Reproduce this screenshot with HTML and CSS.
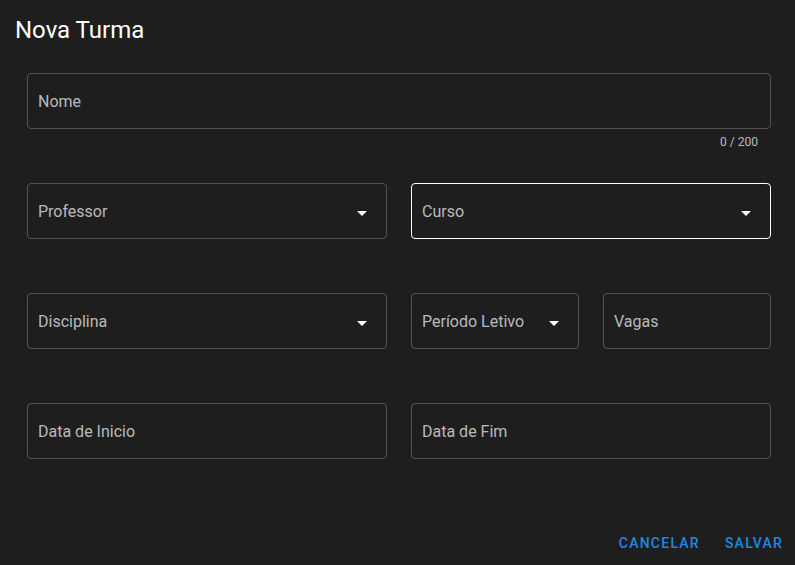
FILE: index.html
```html
<!DOCTYPE html>
<html lang="pt">
<head>
<meta charset="utf-8">
<title>Nova Turma</title>
<link rel="stylesheet" href="styles.css">
</head>
<body>
<div class="dialog">
  <h2 class="title">Nova Turma</h2>
  <div class="content">
    <div class="field-wrap">
      <div class="field"><span class="label">Nome</span></div>
      <div class="helper">0 / 200</div>
    </div>
    <div class="row two">
      <div class="field select"><span class="label">Professor</span>
        <svg class="arrow" viewBox="0 0 24 24" width="24" height="24"><path d="M7 10l5 5 5-5z"/></svg>
      </div>
      <div class="field select active"><span class="label">Curso</span>
        <svg class="arrow" viewBox="0 0 24 24" width="24" height="24"><path d="M7 10l5 5 5-5z"/></svg>
      </div>
    </div>
    <div class="row two">
      <div class="field select"><span class="label">Disciplina</span>
        <svg class="arrow" viewBox="0 0 24 24" width="24" height="24"><path d="M7 10l5 5 5-5z"/></svg>
      </div>
      <div class="row pair">
        <div class="field select"><span class="label">Período Letivo</span>
          <svg class="arrow" viewBox="0 0 24 24" width="24" height="24"><path d="M7 10l5 5 5-5z"/></svg>
        </div>
        <div class="field"><span class="label">Vagas</span></div>
      </div>
    </div>
    <div class="row two">
      <div class="field"><span class="label">Data de Inicio</span></div>
      <div class="field"><span class="label">Data de Fim</span></div>
    </div>
  </div>
  <div class="actions">
    <button class="btn">Cancelar</button>
    <button class="btn">Salvar</button>
  </div>
</div>
</body>
</html>
```
FILE: styles.css
```css
html, body {
  margin: 0;
  padding: 0;
  background: #1e1e1e;
  font-family: Roboto, "Liberation Sans", sans-serif;
  color: #fff;
}
.dialog {
  width: 795px;
  height: 565px;
  display: flex;
  flex-direction: column;
  box-sizing: border-box;
}
.title {
  margin: 0;
  padding: 14px 15px 0;
  font-size: 24px;
  font-weight: 400;
  line-height: 32px;
  height: 47px;
  box-sizing: content-box;
}
.content {
  padding: 12px 24px 0 27px;
  display: flex;
  flex-direction: column;
  gap: 54px;
  flex: 1;
}
.field-wrap {
  display: flex;
  flex-direction: column;
}
.helper {
  font-size: 12px;
  line-height: 20px;
  margin: 3px 13px -23px 0;
  text-align: right;
  color: rgba(255,255,255,0.7);
}
.row {
  display: grid;
  gap: 24px;
}
.row.two,
.row.pair {
  grid-template-columns: 1fr 1fr;
}
.field {
  position: relative;
  height: 56px;
  box-sizing: border-box;
  border: 1px solid rgba(255,255,255,0.23);
  border-radius: 4px;
  display: flex;
  align-items: center;
  padding: 2px 10px 0;
}
.field.active {
  border-color: #fff;
}
.label {
  font-size: 16px;
  color: rgba(255,255,255,0.7);
  line-height: 24px;
}
.arrow {
  position: absolute;
  right: 12px;
  top: 17px;
  fill: #fff;
}
.actions {
  display: flex;
  justify-content: flex-end;
  gap: 9px;
  padding: 0 4px 4px 0;
}
.btn {
  background: none;
  border: none;
  font-family: Roboto, "Liberation Sans", sans-serif;
  font-size: 14px;
  font-weight: 500;
  letter-spacing: 0.08857em;
  text-transform: uppercase;
  color: #1e88e5;
  padding: 6px 8px;
  height: 36px;
  line-height: 24px;
  cursor: pointer;
}
```
